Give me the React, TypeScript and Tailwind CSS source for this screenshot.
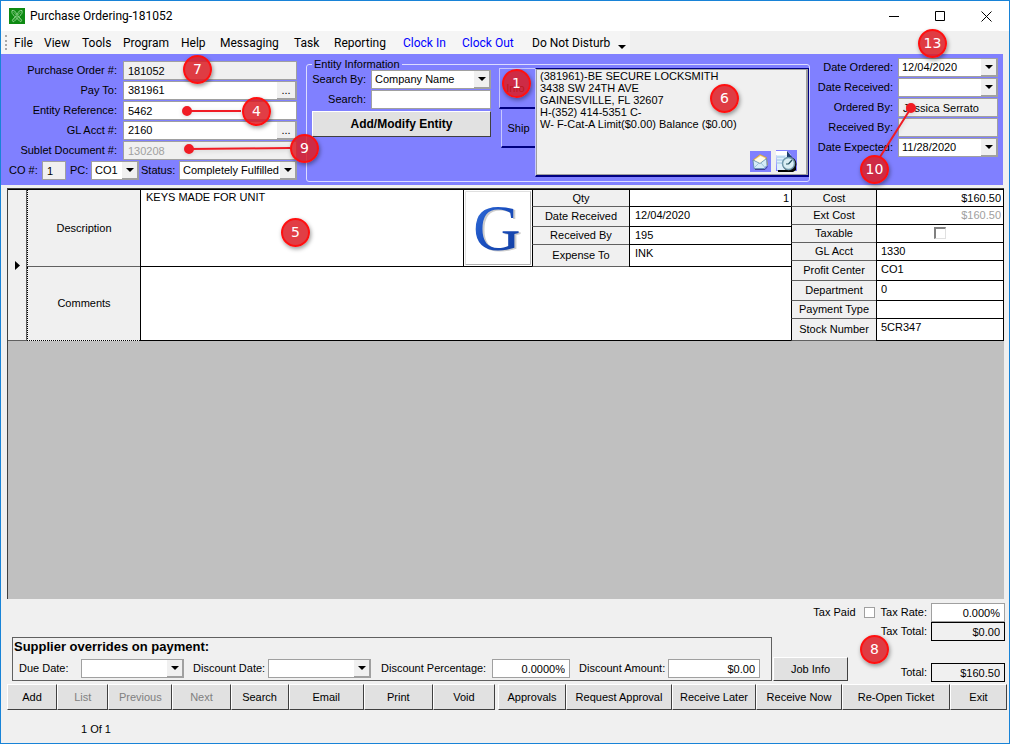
import React from 'react';

const MENU = [
  { label: 'File', cls: 'w-[30px]' },
  { label: 'View', cls: 'w-[38px]' },
  { label: 'Tools', cls: 'w-[41px]' },
  { label: 'Program', cls: 'w-[58px]' },
  { label: 'Help', cls: 'w-[39px]' },
  { label: 'Messaging', cls: 'w-[74px]' },
  { label: 'Task', cls: 'w-[40px]' },
  { label: 'Reporting', cls: 'w-[69px]' },
  { label: 'Clock In', cls: 'w-[59px] text-[#0000ff]' },
  { label: 'Clock Out', cls: 'w-[70px] text-[#0000ff]' },
  { label: 'Do Not Disturb', cls: 'w-[86px]' },
];

const RECORD_ACTIONS = [
  { label: 'Add', cls: 'basis-[50px]' },
  { label: 'List', cls: 'basis-[51px]', disabled: true },
  { label: 'Previous', cls: 'basis-[64px]', disabled: true },
  { label: 'Next', cls: 'basis-[58px]', disabled: true },
  { label: 'Search', cls: 'basis-[58px]' },
  { label: 'Email', cls: 'basis-[75px]' },
  { label: 'Print', cls: 'basis-[69px]' },
  { label: 'Void', cls: 'basis-[62px]' },
];

const ORDER_ACTIONS = [
  { label: 'Approvals', cls: 'basis-[68px]' },
  { label: 'Request Approval', cls: 'basis-[106px]' },
  { label: 'Receive Later', cls: 'basis-[84px]' },
  { label: 'Receive Now', cls: 'basis-[86px]' },
  { label: 'Re-Open Ticket', cls: 'basis-[108px]' },
  { label: 'Exit', cls: 'basis-[57px]' },
];

const RECEIVING = [
  { label: 'Qty', value: '1', row: 'h-[17px]', input: 'text-right' },
  { label: 'Date Received', value: '12/04/2020', row: 'h-[20px]', input: '' },
  { label: 'Received By', value: '195', row: 'h-[18px]', input: '' },
  { label: 'Expense To', value: 'INK', row: 'h-[22px]', input: '' },
];

const COSTING = [
  { label: 'Cost', value: '$160.50', row: 'h-[17px]', input: 'text-right' },
  { label: 'Ext Cost', value: '$160.50', row: 'h-[18px]', input: 'text-right text-[#a0a0a0]' },
  { label: 'Taxable', value: null, row: 'h-[18px]', input: '' },
  { label: 'GL Acct', value: '1330', row: 'h-[18px]', input: '' },
  { label: 'Profit Center', value: 'CO1', row: 'h-[20px]', input: '' },
  { label: 'Department', value: '0', row: 'h-[20px]', input: '' },
  { label: 'Payment Type', value: '', row: 'h-[18px]', input: '' },
  { label: 'Stock Number', value: '5CR347', row: 'h-[22px]', input: '' },
];

const CALLOUTS = [
  { n: 7, pos: 'left-[182px] top-[54px]' },
  { n: 4, pos: 'left-[241px] top-[96px]' },
  { n: 9, pos: 'left-[289px] top-[133px]' },
  { n: 1, pos: 'left-[501px] top-[68px]' },
  { n: 6, pos: 'left-[709px] top-[83px]' },
  { n: 13, pos: 'left-[917px] top-[28px]' },
  { n: 10, pos: 'left-[859px] top-[154px]' },
  { n: 5, pos: 'left-[280px] top-[217px]' },
  { n: 8, pos: 'left-[859px] top-[634px]' },
];

const DownArrow = () => (
  <svg width="8" height="4" viewBox="0 0 8 4" aria-hidden="true">
    <path d="M0 0h8L4 4z" fill="#000" />
  </svg>
);

interface FieldProps {
  id: string;
  value?: string;
  className?: string;
  readOnly?: boolean;
}

const TextField: React.FC<FieldProps> = ({ id, value = '', className = 'bg-white', readOnly }) => (
  <input
    id={id}
    type="text"
    defaultValue={value}
    readOnly={readOnly}
    className={`h-[19px] min-w-0 border border-[#a0a0a0] px-1 outline-none ${className}`}
  />
);

const LookupField: React.FC<FieldProps> = ({ id, value }) => (
  <div className="flex h-[19px] min-w-0 flex-1 border border-[#a0a0a0] bg-white">
    <input id={id} type="text" defaultValue={value} className="min-w-0 flex-1 px-1 outline-none" />
    <button aria-label="Look up" className="w-[19px] border-r border-b border-[#a0a0a0] bg-[#f0f0f0] leading-[16px]">
      ...
    </button>
  </div>
);

const SelectField: React.FC<FieldProps> = ({ id, value, className = '' }) => (
  <div className={`flex h-[19px] min-w-0 border border-[#a0a0a0] bg-white ${className}`}>
    <select id={id} className="min-w-0 flex-1 appearance-none overflow-hidden pl-[3px] outline-none">
      <option>{value}</option>
    </select>
    <span className="flex w-4 shrink-0 items-center justify-center border-r border-b border-[#a0a0a0] bg-[#f0f0f0]">
      <DownArrow />
    </span>
  </div>
);

const DateField: React.FC<FieldProps> = ({ id, value = '', className = '' }) => (
  <div className={`flex h-[19px] border border-[#a0a0a0] bg-white ${className}`}>
    <input id={id} type="text" defaultValue={value} className="min-w-0 flex-1 pl-[3px] outline-none" />
    <button
      aria-label="Open calendar"
      className="flex w-4 shrink-0 items-center justify-center border-r border-b border-[#a0a0a0] bg-[#f0f0f0]"
    >
      <DownArrow />
    </button>
  </div>
);

const LeftRow: React.FC<{ id: string; label: string; children: React.ReactNode }> = ({ id, label, children }) => (
  <div className="flex items-center">
    <label htmlFor={id} className="w-[122px] shrink-0 pr-[6px] text-right">{label}</label>
    {children}
  </div>
);

const RightRow: React.FC<{ id: string; label: string; children: React.ReactNode }> = ({ id, label, children }) => (
  <div className="flex items-center">
    <label htmlFor={id} className="flex-1 pr-[5px] text-right">{label}</label>
    {children}
  </div>
);

const ActionButton: React.FC<{ label: string; cls: string; disabled?: boolean }> = ({ label, cls, disabled }) => (
  <button
    disabled={disabled}
    className={`h-[26px] min-w-0 grow border-t border-r border-b border-l border-t-white border-l-white border-r-[#404040] border-b-[#404040] bg-[#e1e1e1] disabled:text-[#808080] ${cls}`}
  >
    {label}
  </button>
);

const App: React.FC = () => {
  return (
    <div className="relative flex min-h-screen w-full flex-col border border-[#1883d7] bg-[#f0f0f0] font-['Liberation_Sans',Arial,sans-serif] text-[11px] leading-[13px] whitespace-nowrap text-black">

      {/* --- Title bar --- */}
      <header className="flex h-[30px] items-center bg-white pl-2">
        <svg width="16" height="16" viewBox="0 0 16 16" aria-hidden="true">
          <rect width="16" height="16" fill="#0e8a12" />
          <g fill="none" stroke="#8fd48f" strokeWidth="1">
            <path d="M3 2.500c2.500-.5 3.500 1 4.500 3.500l5 6c.5 1-.5 2-1.500 1.500l-6-6C3.500 6.500 2.500 5 3 2.500z" />
            <path d="M13 2.500c-2.500-.5-3.500 1-4.500 3.500l-5 6c-.5 1 .5 2 1.500 1.500l6-6c1.500-1 2.500-2.500 2-5z" />
          </g>
          <path d="M4 3.500l8 9M12 3.500l-8 9" stroke="#5cb85c" strokeWidth="1" />
        </svg>
        <h1 className="flex-1 pl-[5px] font-[Roboto,'Open_Sans',sans-serif] text-[12px]">Purchase Ordering-181052</h1>
        <button aria-label="Minimize" className="flex h-full w-[46px] items-center justify-center">
          <svg width="11" height="11" viewBox="0 0 11 11"><path d="M0 5.500h10" stroke="#000" /></svg>
        </button>
        <button aria-label="Maximize" className="flex h-full w-[46px] items-center justify-center">
          <svg width="11" height="11" viewBox="0 0 11 11"><path d="M.5.5h9v9h-9z" fill="none" stroke="#000" /></svg>
        </button>
        <button aria-label="Close" className="flex h-full w-[46px] items-center justify-center">
          <svg width="11" height="11" viewBox="0 0 11 11"><path d="M.5.5l10 10M10.500.5l-10 10" stroke="#000" /></svg>
        </button>
      </header>

      {/* --- Menu strip --- */}
      <nav className="flex h-[23px]">
        <div className="flex items-center bg-[#f5f5f5] pl-1 font-[Roboto,'Open_Sans',sans-serif] text-[12px]">
          <span className="mr-[7px] h-[15px] w-px border-l-2 border-dotted border-[#a8a8a8]"></span>
          {MENU.map((m) => (
            <button key={m.label} className={`pt-[2px] text-left ${m.cls}`}>{m.label}</button>
          ))}
          <span className="pt-2 pr-1"><DownArrow /></span>
        </div>
      </nav>

      {/* --- Order header --- */}
      <section className="mr-[6px] flex h-[131px] bg-[#8080ff]">
        <div className="flex w-[296px] flex-col gap-px pt-[7px]">
          <LeftRow id="po" label="Purchase Order #:">
            <TextField id="po" value="181052" readOnly className="flex-1 bg-[#f0f0f0]" />
          </LeftRow>
          <LeftRow id="payto" label="Pay To:">
            <LookupField id="payto" value="381961" />
          </LeftRow>
          <LeftRow id="entref" label="Entity Reference:">
            <TextField id="entref" value="5462" className="flex-1 bg-white" />
          </LeftRow>
          <LeftRow id="glacct" label="GL Acct #:">
            <LookupField id="glacct" value="2160" />
          </LeftRow>
          <LeftRow id="sublet" label="Sublet Document #:">
            <TextField id="sublet" value="130208" readOnly className="flex-1 bg-[#f0f0f0] text-[#a0a0a0]" />
          </LeftRow>
          <div className="flex items-center pl-2">
            <label htmlFor="co" className="w-[33px]">CO #:</label>
            <TextField id="co" value="1" className="w-6 bg-[#f0f0f0]" />
            <label htmlFor="pc" className="w-[25px] pl-1">PC:</label>
            <SelectField id="pc" value="CO1" className="w-12" />
            <label htmlFor="status" className="w-10 pl-[2px]">Status:</label>
            <SelectField id="status" value="Completely Fulfilled" className="flex-1" />
          </div>
        </div>

        <fieldset className="mt-[6px] mb-[3px] ml-[9px] min-w-0 flex-1 rounded-[3px] border border-[#dcdcff]">
          <legend className="ml-[5px] px-[2px] leading-[8px]">Entity Information</legend>
          <div className="flex">
            <div className="flex w-[184px] flex-col gap-px pt-[2px]">
              <div className="flex items-center">
                <label htmlFor="searchby" className="w-[64px] pr-[5px] text-right">Search By:</label>
                <SelectField id="searchby" value="Company Name" className="flex-1" />
              </div>
              <div className="flex items-center">
                <label htmlFor="search" className="w-[64px] pr-[5px] text-right">Search:</label>
                <TextField id="search" className="flex-1 bg-white" />
              </div>
              <button className="mt-px ml-[5px] h-[26px] border border-t-white border-r-[#404040] border-b-[#404040] border-l-white bg-[#e1e1e1] text-[12px] font-bold">
                Add/Modify Entity
              </button>
            </div>

            <div role="tablist" className="ml-2 flex w-[36px] flex-col items-end gap-px">
              <button role="tab" aria-selected="true" className="h-[41px] w-full border-t border-b-2 border-l border-t-[#c8c8ff] border-b-[#000080] border-l-[#c8c8ff] pr-1">Info</button>
              <button role="tab" aria-selected="false" className="h-[38px] w-[34px] border-b-2 border-l border-b-[#000080] border-l-[#c8c8ff]">Ship</button>
            </div>

            <div role="tabpanel" className="flex h-[109px] min-w-0 flex-1 border-t border-r border-b-2 border-l border-[#000080] border-l-[#c8c8ff]">
              <div className="flex min-w-0 flex-1 flex-col justify-between border border-r-2 border-[#a0a0a0] bg-[#f0f0f0] pl-[3px]">
                <address className="leading-[12px] not-italic">
                  (381961)-BE SECURE LOCKSMITH<br />
                  3438 SW 24TH AVE<br />
                  GAINESVILLE, FL 32607<br />
                  H-(352) 414-5351 C-<br />
                  W- F-Cat-A Limit($0.00) Balance ($0.00)
                </address>
                <div className="flex justify-end gap-[5px] pr-[9px] pb-[2px]">
                  <button aria-label="Email entity">
                    <svg width="21" height="21" viewBox="0 0 21 21">
                      <rect width="21" height="21" fill="#8080ff" />
                      <path d="M3 9 10 3.500 16.500 6.500 17.500 14 5 17.500z" fill="#f7cf6b" stroke="#c89030" strokeWidth=".6" />
                      <path d="M5 8.500 10.500 5 15 7v6H5z" fill="#fffbe8" />
                      <path d="M3 9 10 12.500 16.500 7.500 17 14.500 14 17.500H4z" fill="#d5ecf8" stroke="#5b89a8" strokeWidth=".8" />
                      <path d="M4 17 9 12M11 12l4 4.500" stroke="#8fb9d0" strokeWidth=".8" />
                      <path d="M5 18.500h10l2.500-3" fill="none" stroke="#3c3c90" />
                    </svg>
                  </button>
                  <button aria-label="Entity history">
                    <svg width="21" height="22" viewBox="0 0 21 22">
                      <rect width="21" height="21" fill="#8080ff" />
                      <path d="M2 20h13l5-4v4l-3 2H2z" fill="#000" />
                      <path d="M0 1h11l4 4v15H1z" fill="#dff0fb" />
                      <path d="M0 1h11v4H0z" fill="#fff" />
                      <path d="M1 7h8M1 10h7M1 13h5" stroke="#9cc4e4" />
                      <path d="M11 1l5 6h-5z" fill="#1d3c6e" />
                      <circle cx="13.500" cy="14" r="7" fill="#111" />
                      <circle cx="12.500" cy="13.500" r="6" fill="#d9eef4" stroke="#6f98ab" strokeWidth="1.500" />
                      <path d="M12.500 14 16 10M12.500 14H10" stroke="#23505f" strokeWidth="1.200" />
                    </svg>
                  </button>
                </div>
              </div>
            </div>
          </div>
        </fieldset>

        <div className="flex w-[193px] flex-col gap-px pt-1 pr-[5px]">
          <RightRow id="dordered" label="Date Ordered:">
            <DateField id="dordered" value="12/04/2020" className="w-[100px]" />
          </RightRow>
          <RightRow id="dreceived" label="Date Received:">
            <DateField id="dreceived" className="w-[100px]" />
          </RightRow>
          <RightRow id="orderedby" label="Ordered By:">
            <TextField id="orderedby" value="Jessica Serrato" readOnly className="w-[100px] bg-[#f0f0f0]" />
          </RightRow>
          <RightRow id="receivedby" label="Received By:">
            <TextField id="receivedby" readOnly className="w-[100px] bg-[#f0f0f0]" />
          </RightRow>
          <RightRow id="dexpected" label="Date Expected:">
            <DateField id="dexpected" value="11/28/2020" className="w-[100px]" />
          </RightRow>
        </div>
      </section>

      {/* --- Line item grid --- */}
      <main className="mt-[3px] mr-[5px] ml-[6px] flex-1 border-t border-l border-[#404040] bg-[#c0c0c0]">
        <div className="flex border-t border-black">
          <div className="flex w-[19px] items-center justify-center border-r border-b border-[#606060] bg-[#f0f0f0]">
            <svg width="5" height="9" viewBox="0 0 5 9" aria-hidden="true"><path d="M0 0l5 4.500L0 9z" /></svg>
          </div>

          <div className="flex min-w-0 flex-1 flex-col">
            <div className="flex h-[77px]">
              <label htmlFor="desc" className="flex w-[113px] items-center justify-center border-b border-l border-b-[#606060] border-l-black bg-[#f0f0f0] [border-left-style:dotted]">
                Description
              </label>
              <textarea id="desc" defaultValue="KEYS MADE FOR UNIT" className="min-w-0 flex-1 resize-none border-b border-l border-black bg-white px-[5px] pt-px outline-none" />
              <button aria-label="Search the web" className="flex w-[69px] items-center justify-center border-b border-l border-black bg-white p-px">
                <svg width="66" height="74" viewBox="0 0 66 74" className="overflow-visible">
                  <defs>
                    <linearGradient id="gblue" x1="0" y1="0" x2="1" y2="1">
                      <stop offset="0" stopColor="#3a78e0" />
                      <stop offset=".45" stopColor="#1a4fc0" />
                      <stop offset="1" stopColor="#123c9c" />
                    </linearGradient>
                  </defs>
                  <path d="M.5.5h65v73h-65z" fill="#fff" stroke="#e0e0e0" />
                  <path d="M.5 73.500h65v-73" fill="none" stroke="#b0b0b0" />
                  <text x="10" y="60" fontFamily="Liberation Serif, serif" fontSize="66" fill="#cccccc">G</text>
                  <text x="8" y="59" fontFamily="Liberation Serif, serif" fontSize="66" fill="url(#gblue)">G</text>
                </svg>
              </button>
              <table className="w-[259px] table-fixed border-separate border-spacing-0">
                <tbody>
                  {RECEIVING.map((r) => (
                    <tr key={r.label} className={r.row}>
                      <th scope="row" className="w-[97px] border-b border-l border-b-[#606060] border-l-black bg-[#f0f0f0] p-0 font-normal">{r.label}</th>
                      <td className="border-b border-l border-black bg-white p-0 align-top">
                        <input aria-label={r.label} defaultValue={r.value ?? ''} className={`block h-4 w-full pr-[2px] pl-[5px] outline-none ${r.input}`} />
                      </td>
                    </tr>
                  ))}
                </tbody>
              </table>
            </div>
            <div className="flex h-[74px]">
              <label htmlFor="comments" className="flex w-[113px] items-center justify-center border-b border-l border-black bg-[#f0f0f0] [border-bottom-style:dotted] [border-left-style:dotted]">
                Comments
              </label>
              <textarea id="comments" className="min-w-0 flex-1 resize-none border-b border-l border-black bg-white px-[5px] outline-none" />
            </div>
          </div>

          <table className="w-[213px] table-fixed border-separate border-spacing-0 border-r border-black">
            <tbody>
              {COSTING.map((r) => (
                <tr key={r.label} className={r.row}>
                  <th scope="row" className="w-[85px] border-b border-l border-b-[#606060] border-l-black bg-[#f0f0f0] p-0 font-normal">{r.label}</th>
                  <td className="border-b border-l border-black bg-white p-0 align-top">
                    {r.value === null ? (
                      <input type="checkbox" aria-label={r.label} className="mx-auto mt-[2px] block size-3 appearance-none border-t-2 border-r border-b border-l-2 border-t-[#808080] border-r-[#e0e0e0] border-b-[#e0e0e0] border-l-[#808080]" />
                    ) : (
                      <input aria-label={r.label} defaultValue={r.value} className={`block h-4 w-full pr-[2px] pl-1 outline-none ${r.input}`} />
                    )}
                  </td>
                </tr>
              ))}
            </tbody>
          </table>
        </div>
      </main>

      {/* --- Totals and payment overrides --- */}
      <section className="mr-1 ml-[11px] pt-1">
        <div className="flex items-center justify-end">
          <label htmlFor="taxpaid" className="pr-2">Tax Paid</label>
          <input id="taxpaid" type="checkbox" className="size-[11px] appearance-none border border-[#a0a0a0] bg-white" />
          <label htmlFor="taxrate" className="pr-1 pl-[6px]">Tax Rate:</label>
          <TextField id="taxrate" value="0.000%" className="w-[74px] bg-white text-right" />
        </div>
        <div className="flex items-end">
          <div className="mb-px min-w-0 flex-1 border border-[#606060] pb-[2px]">
            <h2 className="px-px pt-px pb-[5px] text-[13px] leading-[15px] font-bold">Supplier overrides on payment:</h2>
            <div className="flex items-center">
              <label htmlFor="due" className="w-[68px] pl-[6px]">Due Date:</label>
              <DateField id="due" className="w-[103px]" />
              <label htmlFor="ddate" className="w-[84px] pl-[9px]">Discount Date:</label>
              <DateField id="ddate" className="w-[103px]" />
              <label htmlFor="dpct" className="w-[121px] pl-[10px]">Discount Percentage:</label>
              <TextField id="dpct" value="0.0000%" className="w-[78px] bg-white text-right" />
              <label htmlFor="damt" className="w-[98px] pl-[9px]">Discount Amount:</label>
              <TextField id="damt" value="$0.00" className="w-[92px] bg-white text-right" />
            </div>
          </div>
          <button className="mb-px ml-px h-[24px] w-[75px] border border-t-white border-r-[#404040] border-b-[#404040] border-l-white bg-[#e1e1e1]">
            Job Info
          </button>
          <div className="flex w-[157px] flex-col gap-[22px]">
            <div className="flex items-center justify-end">
              <label htmlFor="taxtotal" className="pr-1">Tax Total:</label>
              <TextField id="taxtotal" value="$0.00" readOnly className="w-[74px] border-black! bg-[#f0f0f0] text-right" />
            </div>
            <div className="flex items-center justify-end">
              <label htmlFor="total" className="pr-1">Total:</label>
              <TextField id="total" value="$160.50" readOnly className="w-[74px] border-black! bg-[#f0f0f0] text-right" />
            </div>
          </div>
        </div>
      </section>

      {/* --- Action bar --- */}
      <div className="mt-[2px] mr-[2px] ml-[6px] flex gap-[3px]">
        <div className="flex min-w-0 grow basis-[488px]">
          {RECORD_ACTIONS.map((a) => <ActionButton key={a.label} {...a} />)}
        </div>
        <div className="flex min-w-0 grow basis-[509px]">
          {ORDER_ACTIONS.map((a) => <ActionButton key={a.label} {...a} />)}
        </div>
      </div>
      <footer className="px-20 pt-[13px] pb-[7px]">1 Of 1</footer>

      {/* --- Numbered callouts --- */}
      <svg className="pointer-events-none absolute top-0 left-0 h-[200px] w-full drop-shadow-sm" aria-hidden="true">
        <g stroke="#f01c24" strokeWidth="2" fill="#f01c24">
          <path d="M186 110h54M188 148l101-1M910 107l-31 49" />
          <circle cx="186" cy="110" r="4" />
          <circle cx="188" cy="148" r="4" />
          <circle cx="910" cy="107" r="4" />
        </g>
      </svg>
      {CALLOUTS.map((c) => (
        <span
          key={c.n}
          className={`pointer-events-none absolute flex size-[29px] items-center justify-center rounded-full border-2 border-[#ff1010] bg-[#dc1c24]/85 font-['DejaVu_Sans',sans-serif] text-[14px] text-white shadow-[1px_2px_4px_rgba(0,0,0,0.4)] ${c.pos}`}
        >
          {c.n}
        </span>
      ))}
    </div>
  );
};

export default App;
